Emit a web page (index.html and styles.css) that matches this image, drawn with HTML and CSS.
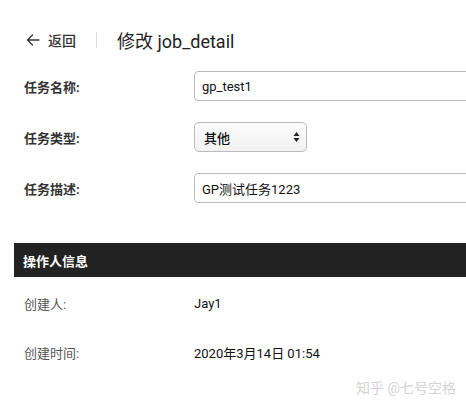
FILE: index.html
```html
<!DOCTYPE html>
<html lang="zh">
<head>
<meta charset="utf-8">
<link rel="stylesheet" href="styles.css">
</head>
<body>
<div class="page">
  <header class="header">
    <a class="back">
      <svg class="back-icon" width="14" height="12" viewBox="0 0 14 12"><path d="M13 6H1.5M6.5 1L1.5 6l5 5" fill="none" stroke="#333" stroke-width="1.3" stroke-linecap="round" stroke-linejoin="round"/></svg>
      <span>返回</span>
    </a>
    <span class="divider"></span>
    <h1 class="title">修改 job_detail</h1>
  </header>

  <form class="form">
    <div class="row">
      <label class="label">任务名称:</label>
      <div class="input">gp_test1</div>
    </div>
    <div class="row">
      <label class="label">任务类型:</label>
      <div class="select"><span>其他</span>
        <svg width="7" height="12" viewBox="0 0 7 12"><path d="M3.5 1L6.5 5H0.5Z M3.5 11L6.5 7H0.5Z" fill="#222"/></svg>
      </div>
    </div>
    <div class="row">
      <label class="label">任务描述:</label>
      <div class="input">GP测试任务1223</div>
    </div>
  </form>

  <div class="section-bar">操作人信息</div>

  <div class="info">
    <div class="info-row"><span class="info-label">创建人:</span><span class="info-value">Jay1</span></div>
    <div class="info-row"><span class="info-label">创建时间:</span><span class="info-value">2020年3月14日 01:54</span></div>
  </div>

  <div class="watermark">知乎 @七号空格</div>
</div>
</body>
</html>
```

FILE: styles.css
```css
* { box-sizing: border-box; }
html, body {
  margin: 0;
  padding: 0;
  background: #fff;
  overflow: hidden;
}
body {
  font-family: Roboto, "Noto Sans CJK SC", sans-serif;
  color: #222;
  font-size: 13px;
}
.page {
  position: relative;
  width: 466px;
  height: 405px;
  overflow: hidden;
}
.header {
  display: flex;
  align-items: center;
  height: 20px;
  margin-top: 30px;
  padding-left: 26px;
}
.back {
  display: flex;
  align-items: center;
  gap: 8px;
  font-size: 14px;
  font-weight: 500;
  color: #333;
}
.divider {
  width: 1px;
  height: 16px;
  background: #ddd;
  margin-left: 20px;
  margin-right: 20px;
}
.title {
  margin: 0;
  font-size: 18px;
  font-weight: 400;
  color: #222;
}
.form {
  margin-top: 21px;
  display: flex;
  flex-direction: column;
  gap: 21px;
}
.row {
  display: flex;
  align-items: center;
  height: 30px;
}
.label {
  flex: 0 0 194px;
  padding-left: 24px;
  font-weight: 700;
  color: #333;
  font-size: 13px;
}
.input {
  flex: 0 0 300px;
  height: 30px;
  border: 1px solid #bbb;
  border-radius: 4px;
  padding-left: 7px;
  display: flex;
  align-items: center;
  color: #111;
  font-size: 13px;
}
.select {
  flex: 0 0 113px;
  height: 30px;
  border: 1px solid #bbb;
  border-radius: 5px;
  background: linear-gradient(#fbfbfb, #f2f2f2);
  display: flex;
  align-items: center;
  justify-content: space-between;
  padding: 0 6px 0 9px;
  font-weight: 500;
  color: #111;
}
.section-bar {
  margin-top: 40px;
  margin-left: 14px;
  height: 34px;
  background: #222;
  color: #fff;
  font-weight: 700;
  font-size: 13px;
  display: flex;
  align-items: center;
  padding-left: 9px;
}
.info {
  margin-top: 16px;
  display: flex;
  flex-direction: column;
  gap: 29px;
}
.info-row {
  display: flex;
  align-items: center;
  height: 20px;
}
.info-label {
  flex: 0 0 194px;
  padding-left: 24px;
  color: #555;
}
.info-value {
  color: #111;
}
.watermark {
  position: absolute;
  left: 356px;
  top: 377px;
  font-size: 14px;
  color: #d4d4d4;
  white-space: nowrap;
}
```
